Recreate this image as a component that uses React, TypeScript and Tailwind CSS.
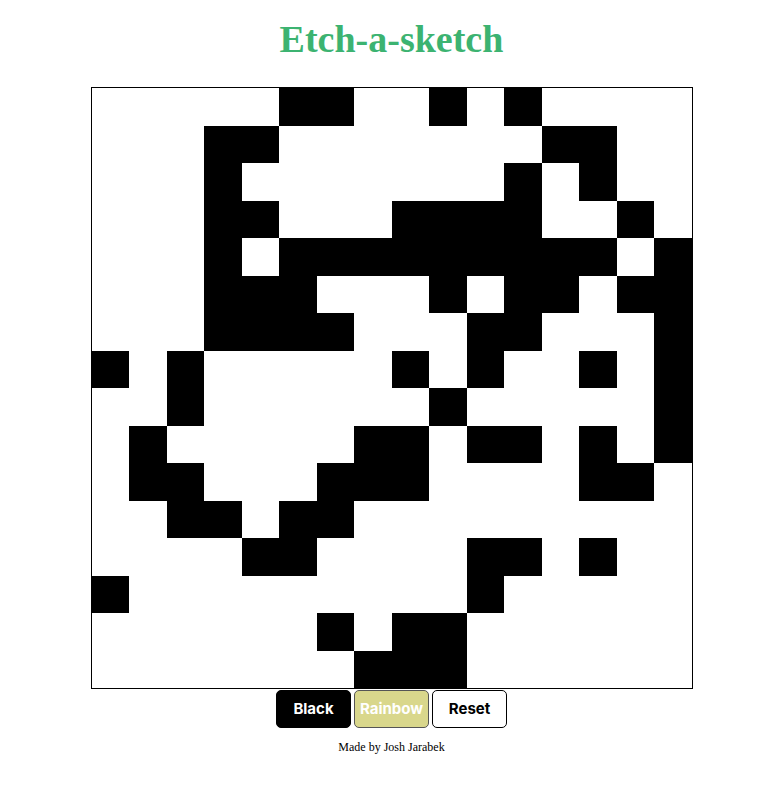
const rows = [
  '0000011001010000',
  '0001100000001100',
  '0001000000010100',
  '0001100011110010',
  '0001011111111101',
  '0001110001011011',
  '0001111000110001',
  '1010000010100101',
  '0010000001000001',
  '0100000110110101',
  '0110001110000110',
  '0011011000000000',
  '0000110000110100',
  '1000000000100000',
  '0000001011000000',
  '0000000111000000',
];

export default function App() {
  return (
    <div className="flex min-h-screen flex-col items-center bg-white">
      <h1 className="mt-[17px] mb-[26px] text-[38px] leading-[44px] font-bold text-[#3cb371] [font-family:'Liberation_Serif',serif]">
        Etch-a-sketch
      </h1>

      {/* Board */}
      <div className="grid h-[602px] w-[602px] grid-cols-[repeat(16,1fr)] grid-rows-[repeat(16,1fr)] border border-black">
        {rows.map((row, r) =>
          row.split('').map((c, i) => (
            <div key={`${r}-${i}`} className={c === '1' ? 'bg-black' : 'bg-white'} />
          ))
        )}
      </div>

      <div className="mt-[1px] flex gap-[3px] [font-family:Inter,'Liberation_Sans',sans-serif]">
        <button className="h-[38px] w-[75px] rounded-[5px] border border-black bg-black text-[15px] font-bold text-white">
          Black
        </button>
        <button className="h-[38px] w-[75px] rounded-[5px] border border-[#555] bg-[#d9d78c] text-[15px] font-bold text-white">
          Rainbow
        </button>
        <button className="h-[38px] w-[75px] rounded-[5px] border border-black bg-white text-[15px] font-bold text-black">
          Reset
        </button>
      </div>

      <p className="mt-[12px] text-[12px] leading-[14px] text-black [font-family:'Liberation_Serif',serif]">
        Made by Josh Jarabek
      </p>
    </div>
  );
}
